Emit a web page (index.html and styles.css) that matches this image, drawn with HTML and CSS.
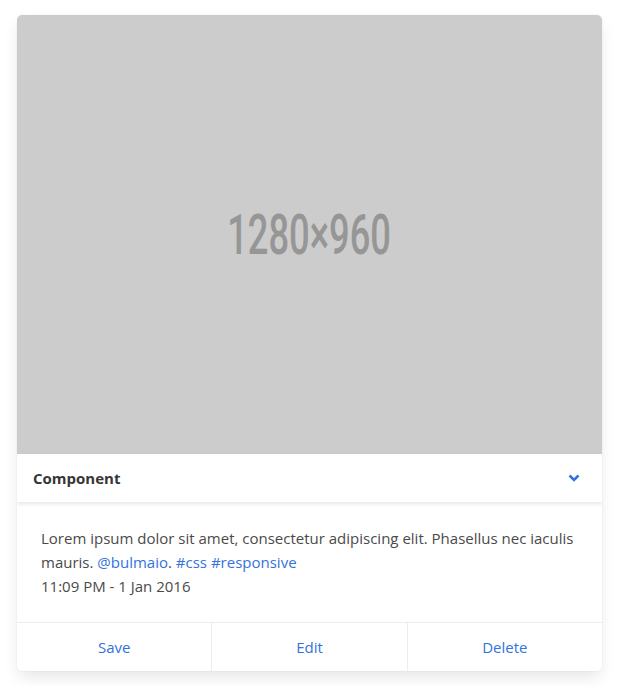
FILE: index.html
```html
<!DOCTYPE html>
<html>
<head>
<meta charset="utf-8">
<title>Card</title>
<link rel="stylesheet" href="styles.css">
</head>
<body>
<div class="page">
  <div class="card">
    <div class="card-image">
      <span class="placeholder">1280×960</span>
    </div>
    <header class="card-header">
      <p class="card-header-title">Component</p>
      <a href="#" class="card-header-icon">
        <svg width="12" height="8" viewBox="0 0 12 8"><path d="M1.5 1.5 L6 6 L10.5 1.5" fill="none" stroke="#3273dc" stroke-width="2.6"/></svg>
      </a>
    </header>
    <div class="card-content">
      Lorem ipsum dolor sit amet, consectetur adipiscing elit. Phasellus nec iaculis mauris. <a href="#">@bulmaio</a>. <a href="#">#css</a> <a href="#">#responsive</a><br>
      <time>11:09 PM - 1 Jan 2016</time>
    </div>
    <footer class="card-footer">
      <a href="#" class="card-footer-item">Save</a>
      <a href="#" class="card-footer-item">Edit</a>
      <a href="#" class="card-footer-item">Delete</a>
    </footer>
  </div>
</div>
</body>
</html>
```

FILE: styles.css
```css
* { margin: 0; padding: 0; box-sizing: border-box; }
body { background: #fff; font-family: "Open Sans", "Noto Sans", sans-serif; font-size: 15px; line-height: 24px; color: #4a4a4a; }
a { color: #3273dc; text-decoration: none; }
.page { padding: 15px 18px 15px 17px; }
.card { background: #fff; border-radius: 5px; box-shadow: 0 8px 16px -2px rgba(10,10,10,.1), 0 0 0 1px rgba(10,10,10,.02); overflow: hidden; }
.card-image { height: 439px; background: #ccc; display: flex; align-items: center; justify-content: center; }
.placeholder { font-family: Roboto, "DejaVu Sans", sans-serif; font-weight: 500; font-size: 55px; color: #969696; transform: scaleX(.66); }
.card-header { display: flex; align-items: stretch; box-shadow: 0 2px 4px rgba(10,10,10,.1); position: relative; }
.card-header-title { flex-grow: 1; padding: 12px 16px; font-weight: 700; color: #363636; }
.card-header-icon { display: flex; align-items: center; padding: 12px 22px 12px 16px; }
.card-content { padding: 24px; }
.card-footer { display: flex; border-top: 1px solid #ededed; }
.card-footer-item { flex: 1 1 0; text-align: center; padding: 12px; }
.card-footer-item + .card-footer-item { border-left: 1px solid #ededed; }
```
